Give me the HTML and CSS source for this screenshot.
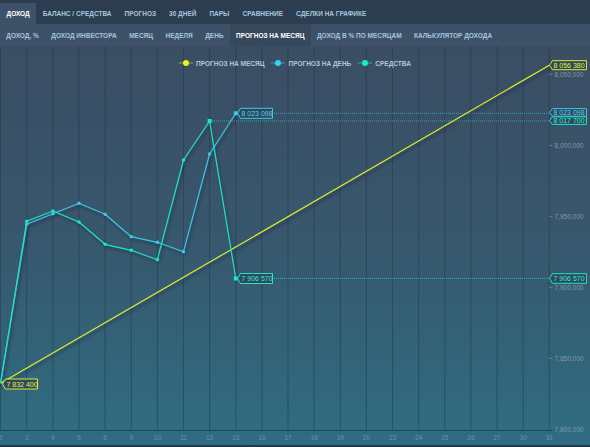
FILE: index.html
```html
<!DOCTYPE html>
<html lang="ru">
<head>
<meta charset="utf-8">
<title>Прогноз на месяц</title>
<link rel="stylesheet" href="styles.css">
</head>
<body>
<div class="app">
  <nav class="tabs tabs-main">
    <a class="tab active">ДОХОД</a>
    <a class="tab">БАЛАНС / СРЕДСТВА</a>
    <a class="tab">ПРОГНОЗ</a>
    <a class="tab">30 ДНЕЙ</a>
    <a class="tab">ПАРЫ</a>
    <a class="tab">СРАВНЕНИЕ</a>
    <a class="tab">СДЕЛКИ НА ГРАФИКЕ</a>
  </nav>
  <nav class="tabs tabs-sub">
    <a class="tab">ДОХОД, %</a>
    <a class="tab">ДОХОД ИНВЕСТОРА</a>
    <a class="tab">МЕСЯЦ</a>
    <a class="tab">НЕДЕЛЯ</a>
    <a class="tab">ДЕНЬ</a>
    <a class="tab active">ПРОГНОЗ НА МЕСЯЦ</a>
    <a class="tab">ДОХОД В % ПО МЕСЯЦАМ</a>
    <a class="tab">КАЛЬКУЛЯТОР ДОХОДА</a>
  </nav>
  <div class="chart">
    <div class="legend">
      <span class="legend-item"><svg class="mk" viewBox="0 0 14 8"><line x1="0" y1="4" x2="14" y2="4" stroke="#8c9a3a" stroke-width="1.2"/><circle cx="7" cy="4" r="3" fill="#eef21c"/></svg>ПРОГНОЗ НА МЕСЯЦ</span>
      <span class="legend-item"><svg class="mk" viewBox="0 0 14 8"><line x1="0" y1="4" x2="14" y2="4" stroke="#3a8fb0" stroke-width="1.2"/><circle cx="7" cy="4" r="3" fill="#34d2f4"/></svg>ПРОГНОЗ НА ДЕНЬ</span>
      <span class="legend-item"><svg class="mk" viewBox="0 0 14 8"><line x1="0" y1="4" x2="14" y2="4" stroke="#2a9f98" stroke-width="1.2"/><circle cx="7" cy="4" r="3" fill="#16f0c8"/></svg>СРЕДСТВА</span>
    </div>
    <svg class="plot" viewBox="0 46 590 401" width="590" height="401">
      <defs>
        <filter id="sh" x="-10%" y="-10%" width="130%" height="130%">
          <feDropShadow dx="1.5" dy="2.5" stdDeviation="1.6" flood-color="#0c1a26" flood-opacity="0.45"/>
        </filter>
      </defs>
      <g class="grid">
        <line x1="0.5" y1="46" x2="0.5" y2="430"/>
        <line x1="26.7" y1="46" x2="26.7" y2="430"/>
        <line x1="52.9" y1="46" x2="52.9" y2="430"/>
        <line x1="79" y1="46" x2="79" y2="430"/>
        <line x1="105.1" y1="46" x2="105.1" y2="430"/>
        <line x1="131.3" y1="46" x2="131.3" y2="430"/>
        <line x1="157.4" y1="46" x2="157.4" y2="430"/>
        <line x1="183.5" y1="46" x2="183.5" y2="430"/>
        <line x1="209.6" y1="46" x2="209.6" y2="430"/>
        <line x1="235.8" y1="46" x2="235.8" y2="430"/>
        <line x1="261.9" y1="46" x2="261.9" y2="430"/>
        <line x1="288" y1="46" x2="288" y2="430"/>
        <line x1="314.2" y1="46" x2="314.2" y2="430"/>
        <line x1="340.3" y1="46" x2="340.3" y2="430"/>
        <line x1="366.4" y1="46" x2="366.4" y2="430"/>
        <line x1="392.5" y1="46" x2="392.5" y2="430"/>
        <line x1="418.7" y1="46" x2="418.7" y2="430"/>
        <line x1="444.8" y1="46" x2="444.8" y2="430"/>
        <line x1="470.9" y1="46" x2="470.9" y2="430"/>
        <line x1="497.1" y1="46" x2="497.1" y2="430"/>
        <line x1="523.2" y1="46" x2="523.2" y2="430"/>
        <line x1="549.3" y1="46" x2="549.3" y2="430"/>
      </g>
      <line class="axis" x1="0" y1="430.5" x2="552" y2="430.5"/>
      <g class="ticks">
        <line x1="549" y1="74.3" x2="552.5" y2="74.3"/>
        <line x1="549" y1="145.3" x2="552.5" y2="145.3"/>
        <line x1="549" y1="216.3" x2="552.5" y2="216.3"/>
        <line x1="549" y1="287.3" x2="552.5" y2="287.3"/>
        <line x1="549" y1="358.3" x2="552.5" y2="358.3"/>
      </g>
      <g class="ylabels">
        <text x="554.5" y="76.6">8,050,000</text>
        <text x="554.5" y="147.6">8,000,000</text>
        <text x="554.5" y="218.6">7,950,000</text>
        <text x="554.5" y="289.6">7,900,000</text>
        <text x="554.5" y="360.6">7,850,000</text>
        <text x="554.5" y="431.6">7,800,000</text>
      </g>
      <g class="xlabels">
        <text x="0.6" y="439.5">2</text>
        <text x="26.7" y="439.5">3</text>
        <text x="52.9" y="439.5">4</text>
        <text x="79" y="439.5">5</text>
        <text x="105.1" y="439.5">6</text>
        <text x="131.3" y="439.5">9</text>
        <text x="157.4" y="439.5">10</text>
        <text x="183.5" y="439.5">11</text>
        <text x="209.6" y="439.5">12</text>
        <text x="235.8" y="439.5">13</text>
        <text x="261.9" y="439.5">16</text>
        <text x="288" y="439.5">17</text>
        <text x="314.2" y="439.5">18</text>
        <text x="340.3" y="439.5">19</text>
        <text x="366.4" y="439.5">20</text>
        <text x="392.5" y="439.5">23</text>
        <text x="418.7" y="439.5">24</text>
        <text x="444.8" y="439.5">25</text>
        <text x="470.9" y="439.5">26</text>
        <text x="497.1" y="439.5">27</text>
        <text x="523.2" y="439.5">30</text>
        <text x="549.3" y="439.5">31</text>
      </g>

      <g class="guides">
        <line class="g-cyan" x1="272" y1="113.3" x2="549" y2="113.3"/>
        <line class="g-teal" x1="212" y1="121" x2="549" y2="121"/>
        <line class="g-teal" x1="272" y1="278.5" x2="549" y2="278.5"/>
      </g>

      <g filter="url(#sh)">
        <polyline class="ln ln-yellow" points="0.6,383.3 549.3,65.2"/>
        <polyline class="ln ln-cyan" points="0.6,383 26.7,224.3 52.9,213.7 79,203.3 105.1,214.3 131.3,236.7 157.4,242.3 183.5,251.7 209.6,154 235.8,113.3"/>
        <polyline class="ln ln-teal" points="0.6,383 26.7,221.3 52.9,211 79,222 105.1,244.3 131.3,250.3 157.4,259.7 183.5,160 209.6,121 235.8,278.5"/>
      </g>

      <g class="pts pts-cyan">
        <circle cx="26.7" cy="224.3" r="1.7"/>
        <circle cx="52.9" cy="213.7" r="1.7"/>
        <circle cx="79" cy="203.3" r="1.7"/>
        <circle cx="105.1" cy="214.3" r="1.7"/>
        <circle cx="131.3" cy="236.7" r="1.7"/>
        <circle cx="157.4" cy="242.3" r="1.7"/>
        <circle cx="183.5" cy="251.7" r="1.7"/>
        <circle cx="209.6" cy="154" r="1.7"/>
        <rect x="233.8" y="111.3" width="4" height="4"/>
      </g>
      <g class="pts pts-teal">
        <circle cx="26.7" cy="221.3" r="1.7"/>
        <circle cx="52.9" cy="211" r="1.7"/>
        <circle cx="79" cy="222" r="1.7"/>
        <circle cx="105.1" cy="244.3" r="1.7"/>
        <circle cx="131.3" cy="250.3" r="1.7"/>
        <circle cx="157.4" cy="259.7" r="1.7"/>
        <circle cx="183.5" cy="160" r="1.7"/>
        <rect x="207.6" y="119" width="4" height="4"/>
        <rect x="233.8" y="276.5" width="4" height="4"/>
      </g>

      <g class="tag tag-cyan">
        <path d="M237.5,113.3 L240.5,108.3 H272.5 V118.3 H240.5 Z"/>
        <text x="241.5" y="115.8">8 023 098</text>
      </g>
      <g class="tag tag-teal">
        <path d="M237.5,278.5 L240.5,273.5 H272.5 V283.5 H240.5 Z"/>
        <text x="241.5" y="281">7 906 570</text>
      </g>
      <g class="tag tag-yellow">
        <path d="M2.5,384 L5.5,379 H37.5 V389 H5.5 Z"/>
        <text x="6.5" y="386.5">7 832 400</text>
      </g>

      <g class="tag tag-yellow">
        <path d="M549.5,65.2 L552.5,60.7 H586.5 V69.7 H552.5 Z"/>
        <text x="553.5" y="67.7">8 056 380</text>
      </g>
      <g class="tag tag-cyan">
        <path d="M549.5,112.4 L552.5,108.6 H586.5 V116.2 H552.5 Z"/>
        <text x="553.5" y="114.9">8 023 098</text>
      </g>
      <g class="tag tag-teal">
        <path d="M549.5,120.6 L552.5,116.8 H586.5 V124.4 H552.5 Z"/>
        <text x="553.5" y="123.1">8 017 700</text>
      </g>
      <g class="tag tag-teal">
        <path d="M549.5,278.5 L552.5,273.7 H586.5 V283.3 H552.5 Z"/>
        <text x="553.5" y="281">7 906 570</text>
      </g>
    </svg>
  </div>
</div>
</body>
</html>
```

FILE: styles.css
```css
* { box-sizing: border-box; }

html, body {
  margin: 0;
  padding: 0;
  width: 590px;
  height: 447px;
  overflow: hidden;
  background: #2c3d4f;
  font-family: "Liberation Sans", Arial, sans-serif;
}

.app {
  display: flex;
  flex-direction: column;
  width: 590px;
  height: 447px;
}

.tabs {
  display: flex;
  align-items: stretch;
  flex: none;
}

.tab {
  display: flex;
  align-items: center;
  padding: 0 6.5px;
  font-size: 6.5px;
  font-weight: bold;
  color: #a6c4de;
  white-space: nowrap;
  text-decoration: none;
}

.tabs-main {
  height: 24px;
  padding-top: 3px;
  background: #2c3d4f;
}

.tabs-main .tab.active {
  background: #3d5268;
  color: #ffffff;
}

.tabs-sub {
  height: 22px;
  background: #3d5268;
}

.tabs-sub .tab {
  padding: 0 6.25px;
}

.tabs-sub .tab.active {
  background: #35485c;
  color: #ffffff;
}

.chart {
  position: relative;
  flex: 1;
  background: linear-gradient(to bottom, #3a4d63 0%, #37586e 50%, #2f6d82 100%);
  border-bottom: 2px solid #23394a;
  overflow: hidden;
}

.plot {
  display: block;
}

.legend {
  position: absolute;
  top: 12px;
  left: 0;
  right: 0;
  display: flex;
  justify-content: center;
  gap: 7px;
  font-size: 6.5px;
  font-weight: bold;
  color: #b3c5d4;
}

.legend-item {
  display: flex;
  align-items: center;
  gap: 3px;
  height: 10px;
}

.mk {
  width: 14px;
  height: 8px;
}

.grid line {
  stroke: #22364a;
  stroke-opacity: 0.5;
  stroke-width: 1;
}

.axis {
  stroke: #24465a;
  stroke-width: 1;
}

.ticks line {
  stroke: #6f8ea2;
  stroke-width: 0.8;
}

.ylabels text {
  font-family: "Liberation Sans", Arial, sans-serif;
  font-size: 6.5px;
  fill: #8298aa;
}

.xlabels text {
  font-family: "Liberation Sans", Arial, sans-serif;
  font-size: 6.5px;
  fill: #6a8fa2;
  text-anchor: middle;
}

.guides line {
  stroke-width: 1;
  stroke-dasharray: 1 1;
  stroke-opacity: 0.7;
}

.g-cyan { stroke: #39c3e4; }
.g-teal { stroke: #1fd9bd; }

.ln {
  fill: none;
  stroke-width: 1.2;
  stroke-linejoin: round;
}

.ln-yellow { stroke: #dcec2c; }
.ln-cyan { stroke: #3cc4e6; }
.ln-teal { stroke: #1fe2c4; }

.pts-cyan { fill: #3cc8ea; }
.pts-teal { fill: #1fe6c6; }

.tag path {
  fill: #2f475c;
  fill-opacity: 0.9;
  stroke-width: 1;
}

.tag text {
  font-family: "Liberation Sans", Arial, sans-serif;
  font-size: 7px;
}

.tag-cyan path { stroke: #3cc8ea; }
.tag-cyan text { fill: #54d0ee; }
.tag-teal path { stroke: #1fe6c6; }
.tag-teal text { fill: #2fecd0; }
.tag-yellow path { stroke: #dcec2c; }
.tag-yellow text { fill: #e4f03a; }
```
